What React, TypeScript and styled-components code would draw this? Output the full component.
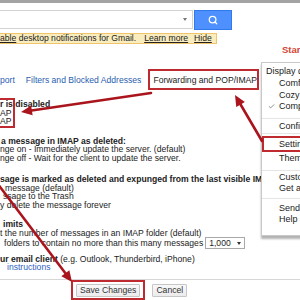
import React from "react";
import styled, { createGlobalStyle } from "styled-components";
import { Search, Check } from "lucide-react";

const GlobalStyle = createGlobalStyle`
  html, body {
    margin: 0;
    padding: 0;
    background: #fff;
  }
  body {
    font-family: "Liberation Sans", Arial, sans-serif;
    overflow: hidden;
  }
`;

const RED = "#bf2a30";
const ARROW = "#aa151d";

const Page = styled.div`
  position: relative;
  width: 300px;
  height: 300px;
  overflow: hidden;
  background: #fff;
  color: #222;
  font-size: 8.6px;
`;

const TopStrip = styled.div`
  height: 3px;
  background: #a3a3a3;
`;

const SearchRow = styled.div`
  display: flex;
  margin-top: 7px;
  height: 20px;
`;

const SearchBox = styled.div`
  box-sizing: border-box;
  width: 195px;
  height: 19px;
  margin-left: -2px;
  border: 1px solid #d3d3d3;
  display: flex;
  align-items: center;
  justify-content: flex-end;
  padding-right: 5px;
`;

const Caret = styled.span`
  width: 0;
  height: 0;
  border-left: 2.5px solid transparent;
  border-right: 2.5px solid transparent;
  border-top: 3px solid #777;
`;

const SearchButton = styled.div`
  box-sizing: border-box;
  width: 38px;
  height: 20px;
  margin-left: 1px;
  background: #4d90fe;
  border: 1px solid #3079ed;
  display: flex;
  align-items: center;
  justify-content: center;
`;

const Notice = styled.div`
  box-sizing: border-box;
  margin-top: 3px;
  width: 217px;
  height: 11px;
  background: #f9edbe;
  border: 1px solid #f0c36d;
  border-left: none;
  display: flex;
  align-items: center;
  white-space: nowrap;
  line-height: 9px;
`;

const NoticeLink = styled.span<{ $gap?: number }>`
  text-decoration: underline;
  margin-left: ${(p) => p.$gap ?? 0}px;
`;

const Alert = styled.div`
  padding-left: 282px;
  height: 11px;
  line-height: 11px;
  white-space: nowrap;
  color: #d14836;
  font-weight: bold;
  font-size: 9.5px;
`;

const Tabs = styled.div`
  display: flex;
  align-items: center;
  margin-top: 14px;
  height: 21px;
  white-space: nowrap;
`;

const Tab = styled.span<{ $gap?: number; $active?: boolean }>`
  margin-left: ${(p) => p.$gap ?? 0}px;
  color: ${(p) => (p.$active ? "#222" : "#2a5db0")};
`;

const Highlight = styled.div<{
  $pad: string;
  $w?: number;
  $h: number;
  $ml?: number;
  $noLeft?: boolean;
}>`
  box-sizing: border-box;
  border: 2px solid ${RED};
  ${(p) => (p.$noLeft ? "border-left: none;" : "")}
  padding: ${(p) => p.$pad};
  height: ${(p) => p.$h}px;
  margin-left: ${(p) => p.$ml ?? 0}px;
  ${(p) => (p.$w ? `width: ${p.$w}px;` : "")}
  display: flex;
  flex-direction: column;
  justify-content: center;
  white-space: nowrap;
`;

const Content = styled.div`
  margin-top: 8px;
`;

const Group = styled.div<{ $gap: number }>`
  margin-top: ${(p) => p.$gap}px;
`;

const Line = styled.div<{ $indent?: number; $bold?: boolean }>`
  height: 8.5px;
  line-height: 8.5px;
  white-space: nowrap;
  padding-left: ${(p) => p.$indent ?? 0}px;
  font-weight: ${(p) => (p.$bold ? "bold" : "normal")};
`;

const SelectLine = styled.div<{ $indent?: number }>`
  display: flex;
  align-items: center;
  height: 12px;
  white-space: nowrap;
  padding-left: ${(p) => p.$indent ?? 0}px;
`;

const Select = styled.span`
  box-sizing: border-box;
  display: inline-flex;
  align-items: center;
  justify-content: space-between;
  width: 40px;
  height: 12px;
  margin-left: 2px;
  padding: 0 3px;
  border: 1px solid #a9a9a9;
  background: #fff;
`;

const SelectCaret = styled.span`
  width: 0;
  height: 0;
  border-left: 2px solid transparent;
  border-right: 2px solid transparent;
  border-top: 3px solid #333;
`;

const Strong = styled.span`
  font-weight: bold;
`;

const Link = styled.span`
  color: #2f63c0;
`;

const Separator = styled.div`
  margin-top: 7px;
  height: 1px;
  background: #d6d6d6;
`;

const ButtonRow = styled.div`
  display: flex;
  align-items: flex-start;
  padding-left: 71px;
`;

const Button = styled.button<{ $gap?: number }>`
  box-sizing: border-box;
  height: 13px;
  margin: ${(p) => (p.$gap ? `4px 0 0 ${p.$gap}px` : "0")};
  padding: 0 3px;
  font-family: inherit;
  font-size: 8.6px;
  line-height: 11px;
  color: #333;
  border: 1px solid #c6c6c6;
  border-radius: 1px;
  background: linear-gradient(#f8f8f8, #ececec);
`;

const Menu = styled.div`
  position: absolute;
  left: 261px;
  top: 62px;
  box-sizing: border-box;
  width: 50px;
  height: 174px;
  padding-top: 3px;
  background: #fff;
  border: 1px solid #c8c8c8;
  box-shadow: 0 3px 2px rgba(0, 0, 0, 0.3);
  font-size: 9px;
  white-space: nowrap;
`;

const MenuHeader = styled.div`
  height: 11.5px;
  line-height: 11.5px;
  padding-left: 4px;
`;

const MenuItem = styled.div<{ $marked?: boolean }>`
  box-sizing: border-box;
  display: flex;
  align-items: center;
  height: ${(p) => (p.$marked ? 16 : 11.5)}px;
  padding-left: ${(p) => (p.$marked ? 15 : 17)}px;
  position: relative;
  ${(p) => (p.$marked ? `border: 2px solid ${RED}; border-right: none;` : "")}
`;

const CheckMark = styled.span`
  position: absolute;
  left: 6px;
  top: 2px;
  display: flex;
`;

const MenuDivider = styled.div<{ $m: string }>`
  height: 1px;
  background: #e5e5e5;
  margin: ${(p) => p.$m};
`;

const Overlay = styled.svg`
  position: absolute;
  left: 0;
  top: 0;
  pointer-events: none;
`;

function Arrow({ x1, y1, x2, y2 }: { x1: number; y1: number; x2: number; y2: number }) {
  const dx = x2 - x1;
  const dy = y2 - y1;
  const len = Math.hypot(dx, dy);
  const ux = dx / len;
  const uy = dy / len;
  const head = 11;
  const half = 5;
  const bx = x2 - ux * head;
  const by = y2 - uy * head;
  const pts = [
    [x2, y2],
    [bx - uy * half, by + ux * half],
    [bx + uy * half, by - ux * half],
  ]
    .map((p) => p.join(","))
    .join(" ");
  return (
    <g>
      <line x1={x1} y1={y1} x2={bx + ux * 2} y2={by + uy * 2} stroke={ARROW} strokeWidth={2.6} strokeLinecap="round" />
      <polygon points={pts} fill={ARROW} />
    </g>
  );
}

export default function App() {
  return (
    <Page>
      <GlobalStyle />
      <TopStrip />
      <SearchRow>
        <SearchBox>
          <Caret />
        </SearchBox>
        <SearchButton>
          <Search size={10} color="#fff" strokeWidth={3} />
        </SearchButton>
      </SearchRow>
      <Notice>
        <NoticeLink>able</NoticeLink>
        &nbsp;desktop notifications for Gmail.
        <NoticeLink $gap={8}>Learn more</NoticeLink>
        <NoticeLink $gap={6}>Hide</NoticeLink>
      </Notice>
      <Alert>Start</Alert>

      <Tabs>
        <Tab>port</Tab>
        <Tab $gap={11}>Filters and Blocked Addresses</Tab>
        <Highlight $pad="0 0 0 3px" $h={21} $ml={7}>
          <Tab $active>Forwarding and POP/IMAP</Tab>
        </Highlight>
      </Tabs>

      <Content>
        <Highlight $pad="0 0 0 3px" $w={18} $h={30} $ml={-3} $noLeft>
          <Line $bold>r is disabled</Line>
          <Line>AP</Line>
          <Line>AP</Line>
        </Highlight>

        <Group $gap={8.5}>
          <Line $bold $indent={1}>a message in IMAP as deleted:</Line>
          <Line>nge on - Immediately update the server. (default)</Line>
          <Line>nge off - Wait for the client to update the server.</Line>
        </Group>

        <Group $gap={13}>
          <Line $bold>sage is marked as deleted and expunged from the last visible IMAP folder:</Line>
          <Line $indent={5}>message (default)</Line>
          <Line $indent={3}>ssage to the Trash</Line>
          <Line>y delete the message forever</Line>
        </Group>

        <Group $gap={11}>
          <Line $bold $indent={3}>imits</Line>
          <Line>t the number of messages in an IMAP folder (default)</Line>
          <SelectLine $indent={4}>
            folders to contain no more than this many messages
            <Select>
              1,000
              <SelectCaret />
            </Select>
          </SelectLine>
        </Group>

        <Group $gap={5.75}>
          <Line>
            <Strong>ur email client</Strong> (e.g. Outlook, Thunderbird, iPhone)
          </Line>
          <Line $indent={7}>
            <Link>instructions</Link>
          </Line>
        </Group>
      </Content>

      <Separator />
      <ButtonRow>
        <Highlight $pad="2px 3px 1px" $h={20}>
          <Button>Save Changes</Button>
        </Highlight>
        <Button $gap={7}>Cancel</Button>
      </ButtonRow>

      <Menu>
        <MenuHeader>Display density:</MenuHeader>
        <MenuItem>Comfortable</MenuItem>
        <MenuItem>Cozy</MenuItem>
        <MenuItem>
          <CheckMark>
            <Check size={7} color="#444" strokeWidth={2} />
          </CheckMark>
          Compact
        </MenuItem>
        <MenuDivider $m="6px 0 1.5px" />
        <MenuItem>Configure inbox</MenuItem>
        <MenuDivider $m="1px 0 2px" />
        <MenuItem $marked>Settings</MenuItem>
        <MenuItem>Themes</MenuItem>
        <MenuDivider $m="6px 0 0.5px" />
        <MenuItem>Customize address</MenuItem>
        <MenuItem>Get add-ons</MenuItem>
        <MenuDivider $m="4px 0 3px" />
        <MenuItem>Send feedback</MenuItem>
        <MenuItem>Help</MenuItem>
      </Menu>

      <Overlay width={300} height={300} viewBox="0 0 300 300">
        <Arrow x1={262} y1={141} x2={235} y2={95} />
        <Arrow x1={151} y1={93} x2={21} y2={112} />
        <Arrow x1={-40} y1={134} x2={72} y2={282} />
      </Overlay>
    </Page>
  );
}
